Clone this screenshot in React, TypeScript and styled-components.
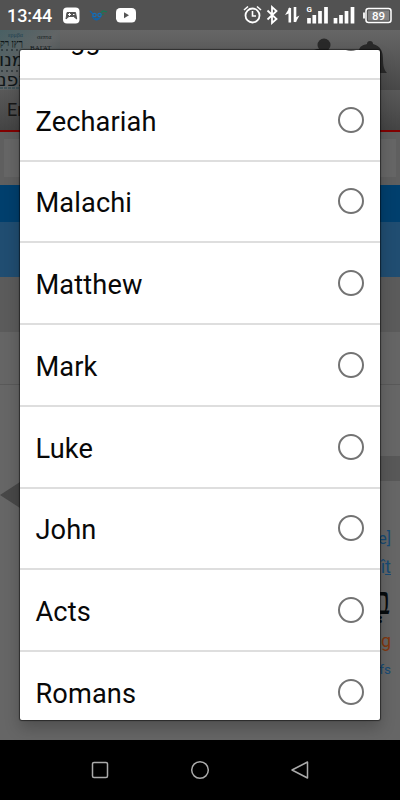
import React from "react";
import styled, { createGlobalStyle } from "styled-components";

const Global = createGlobalStyle`
  * { box-sizing: border-box; }
  body { margin: 0; background: #000; font-family: Roboto, "Noto Sans", sans-serif; }
`;

const Screen = styled.div`
  position: relative;
  width: 400px;
  height: 800px;
  overflow: hidden;
  display: flex;
  flex-direction: column;
  background: #666;
`;

const StatusBar = styled.header`
  height: 30px;
  flex: none;
  display: flex;
  align-items: center;
  justify-content: space-between;
  padding: 0 8px 0 7px;
  background: #525252;
  color: #fff;
`;

const StatusGroup = styled.div`
  display: flex;
  align-items: center;
  svg { display: block; }
`;

const Clock = styled.span`
  width: 56px;
  font-size: 18px;
  line-height: 31px;
  font-weight: 500;
  letter-spacing: -0.1px;
`;

const Page = styled.main`
  height: 710px;
  flex: none;
  display: flex;
  flex-direction: column;
`;

const SiteHeader = styled.div`
  height: 60px;
  display: flex;
  justify-content: space-between;
  background: linear-gradient(#666, #484848);
`;

const SiteNav = styled.div`
  height: 41.5px;
  padding-left: 7px;
  border-bottom: 2px solid #820000;
  background: linear-gradient(#595959, #444);
  font-size: 18px;
  line-height: 40px;
  color: #171717;
`;

const Strip = styled.div<{ $h: number; $bg: string; $line?: string }>`
  height: ${(p) => p.$h}px;
  flex: none;
  background: ${(p) => p.$bg};
  border-bottom: ${(p) => (p.$line ? `1px solid ${p.$line}` : "none")};
`;

const SearchArea = styled.div`
  height: 53.5px;
  padding: 7px 4px 8px;
  background: #5f5f5f;
`;

const SearchField = styled.div`
  height: 38px;
  background: #666;
`;

const Passage = styled.div`
  flex: 1;
  display: flex;
  justify-content: space-between;
  background: #666;
`;

const PreviousArrow = styled.svg`
  display: block;
  margin-top: 97px;
`;

const Verse = styled.div`
  width: 60px;
  padding-top: 71px;
  display: flex;
  flex-direction: column;
  text-align: right;
`;

const VerseBand = styled.div`
  height: 25px;
  background: #585858;
`;

const Word = styled.span<{ $top: number; $h: number; $size: number; $color: string }>`
  margin-top: ${(p) => p.$top}px;
  height: ${(p) => p.$h}px;
  padding-right: 9px;
  font-size: ${(p) => p.$size}px;
  line-height: ${(p) => p.$h}px;
  color: ${(p) => p.$color};
`;

const Hebrew = styled(Word)`
  font-family: "Liberation Serif", "DejaVu Sans", serif;
`;

const Dialog = styled.section`
  position: absolute;
  left: 20px;
  top: 50px;
  width: 360px;
  height: 670px;
  overflow: hidden;
  border-radius: 2px;
  background: #fff;
  display: flex;
  flex-direction: column;
  justify-content: flex-end;
`;

const DialogShadow = styled.div`
  position: absolute;
  left: 20px;
  top: 50px;
  width: 360px;
  height: 670px;
  border-radius: 2px;
  box-shadow: 0 0 1px 1px rgba(0, 0, 0, 0.5), 0 8px 16px rgba(0, 0, 0, 0.23);
`;

const Option = styled.div`
  height: 81.75px;
  flex: none;
  display: flex;
  align-items: center;
  justify-content: space-between;
  padding: 4px 16px 0 15.5px;
  border-bottom: 2px solid #dedede;
  font-size: 27.2px;
  letter-spacing: 0.12px;
  color: #080808;
  &:last-child { margin-bottom: -13.8px; }
`;

const Radio = styled.span`
  width: 26px;
  height: 26px;
  margin-top: -4px;
  border: 2.3px solid #737373;
  border-radius: 50%;
`;

const NavBar = styled.footer`
  height: 60px;
  flex: none;
  display: grid;
  grid-template-columns: repeat(3, 100px);
  justify-content: center;
  align-items: center;
  justify-items: center;
  background: #000;
`;

const books = ["Haggai", "Zechariah", "Malachi", "Matthew", "Mark", "Luke", "John", "Acts", "Romans"];

const Logo = () => (
  <svg width="60" height="60" viewBox="0 0 60 60">
    <defs>
      <linearGradient id="sheet" x1="0" y1="0" x2="1" y2="1">
        <stop offset="0" stopColor="#496064" />
        <stop offset=".5" stopColor="#626566" />
        <stop offset="1" stopColor="#404a4d" />
      </linearGradient>
    </defs>
    <rect width="60" height="60" fill="url(#sheet)" />
    <g fill="#101719" fontFamily="Liberation Serif, DejaVu Sans, serif">
      <text x="8" y="7" fontSize="6" fill="#1e4050">ερμβα</text>
      <text x="37" y="9" fontSize="6">σεπτα</text>
      <text x="0" y="16" fontSize="9" fontWeight="700">ךץן רק</text>
      <text x="30" y="20" fontSize="7">ΒΑΓΑΤ</text>
      <g fontFamily="DejaVu Sans, sans-serif" fontSize="19">
        <text x="-1" y="36">מנו</text>
        <text x="-1" y="56">נפנ</text>
      </g>
    </g>
    <path d="M1 20h18M1 41h18" stroke="#171f22" strokeDasharray="2 3" />
    <path d="M0 58h20" stroke="#24454e" strokeDasharray="3 1" />
  </svg>
);

const HeaderIcons = () => (
  <svg width="100" height="60" viewBox="300 30 100 60" fill="#292929">
    <circle cx="324" cy="45" r="6.5" />
    <path d="M312 54q0-6 12-5t12 5zM359 50c1-4 4-5 8-6a3 3 0 0 1 6 0c8 2 10 8 10 15 0 7 1 11 4 14h-28z" />
  </svg>
);

const LeftStatusIcons = () => (
  <svg width="75" height="30" viewBox="63 0 75 30">
    <rect x="63" y="7.5" width="16.5" height="16" rx="4" fill="#fff" />
    <path d="M66 19l1-6.5h8.5l1.2 6.5-3-2.5h-4.8z" fill="#555" stroke="#555" strokeLinejoin="round" />
    <path d="M68 14.5h3M69.5 13v3M73 14.5h1.5" stroke="#fff" />
    <g fill="none" strokeWidth="1.2">
      <path d="M90 11l3 3M92 16q4.5 8 9 0M95 18q2 2 4 0" stroke="#1262a8" />
      <path d="M101 13l2-2 4 1M101 15l3-1" stroke="#147957" />
      <circle cx="94.5" cy="15" r="1.7" stroke="#166eb9" />
      <circle cx="99.5" cy="15" r="1.7" stroke="#166eb9" />
    </g>
    <rect x="116" y="8" width="20" height="14.5" rx="4.2" fill="#fff" />
    <path d="M124 12.3v6l5-3z" fill="#555" />
  </svg>
);

const RightStatusIcons = () => (
  <svg width="150" height="30" viewBox="242 0 150 30" fill="none" stroke="#fff">
    <circle cx="252.5" cy="15.5" r="7" strokeWidth="1.8" />
    <path d="M252.5 11v5h3.5M244 10l4-3.5M257 6.5l4 3.5" strokeWidth="1.6" />
    <path d="M267.5 10.5l9 8.5-4.5 4V7l4.5 4-9 8.5" strokeWidth="1.8" />
    <path d="M289.8 22.5V8M295 7v15" strokeWidth="2.6" />
    <path d="M290 7v6l-5 2zM295.5 22.5v-5l4-2z" fill="#fff" stroke="none" />
    <text x="306.5" y="11.5" fontSize="8" fontWeight="700" fill="#fff" stroke="none">G</text>
    <path d="M309 18v5.5M314.3 15v8.5M320 11v12.5M326 7v16.5M335.5 18v5.5M341 15v8.5M346.5 11v12.5M352.5 7v16.5" strokeWidth="3.7" />
    <rect x="366" y="8.5" width="25" height="14" rx="2.5" strokeWidth="1.5" />
    <rect x="368" y="10.5" width="21" height="10" fill="#818181" stroke="none" />
    <path d="M364 12.5v6" strokeWidth="1.8" />
    <text x="378.5" y="19.5" fontSize="11.5" fontWeight="500" textAnchor="middle" fill="#fff" stroke="none">89</text>
  </svg>
);

export default function App() {
  return (
    <>
      <Global />
      <Screen>
        <StatusBar>
          <StatusGroup><Clock>13:44</Clock><LeftStatusIcons /></StatusGroup>
          <StatusGroup><RightStatusIcons /></StatusGroup>
        </StatusBar>
        <Page>
          <SiteHeader><Logo /><HeaderIcons /></SiteHeader>
          <SiteNav>En</SiteNav>
          <SearchArea><SearchField /></SearchArea>
          <Strip $h={37} $bg="#003f6d" />
          <Strip $h={55} $bg="#204d71" />
          <Strip $h={55} $bg="#5b5b5b" />
          <Strip $h={53} $bg="#656565" $line="#595959" />
          <Passage>
            <PreviousArrow width="20" height="27" viewBox="0 0 20 27"><path d="M0 13L20 0v26z" fill="#484848" /></PreviousArrow>
            <Verse>
              <VerseBand />
              <Word $top={47} $h={22} $size={16} $color="#174b75">e]</Word>
              <Word $top={6} $h={22} $size={18} $color="#174b75">î<u>t</u></Word>
              <Hebrew $top={1} $h={44} $size={40} $color="#070b0d" lang="he">בְ</Hebrew>
              <Word $top={7} $h={22} $size={18} $color="#81380f">g</Word>
              <Word $top={8} $h={18} $size={13.5} $color="#174b75">fs</Word>
            </Verse>
          </Passage>
        </Page>
        <NavBar>
          <svg width="18" height="18" fill="none" stroke="#aaa" strokeWidth="1.5"><rect x="1.5" y="1.5" width="15" height="15" rx="1.5" /></svg>
          <svg width="20" height="20" fill="none" stroke="#aaa" strokeWidth="1.5"><circle cx="10" cy="10" r="8.3" /></svg>
          <svg width="18" height="18" fill="none" stroke="#aaa" strokeWidth="1.5" strokeLinejoin="round"><path d="M1 9L16.5 1v16z" /></svg>
        </NavBar>
        <DialogShadow />
        <Dialog>
          {books.map((book) => (
            <Option key={book}>{book}<Radio /></Option>
          ))}
        </Dialog>
      </Screen>
    </>
  );
}
